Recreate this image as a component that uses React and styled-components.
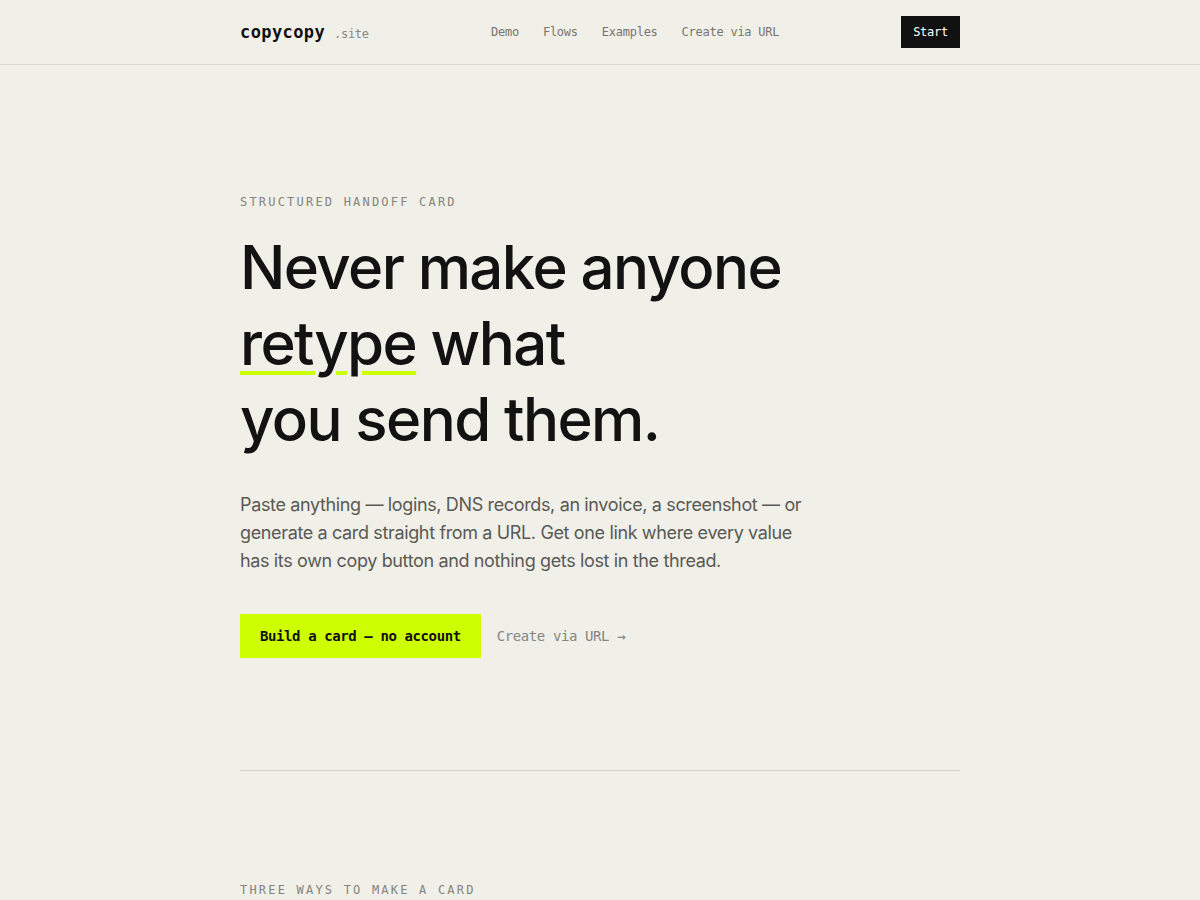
import React from "react";
import styled, { createGlobalStyle } from "styled-components";

const GlobalStyle = createGlobalStyle`
  html, body {
    margin: 0;
    padding: 0;
    background: #f0efe8;
  }
  * { box-sizing: border-box; }
`;

const mono = `"DejaVu Sans Mono", "Liberation Mono", monospace`;
const sans = `Inter, "Noto Sans", sans-serif`;

const Page = styled.div`
  min-height: 100vh;
  background: #f0efe8;
  color: #111;
  font-family: ${sans};
`;

const Header = styled.header`
  height: 65px;
  border-bottom: 1px solid #d9d8d1;
`;

const Inner = styled.div`
  width: 720px;
  margin: 0 auto;
`;

const HeaderRow = styled(Inner)`
  height: 64px;
  display: flex;
  align-items: center;
`;

const Logo = styled.div`
  display: flex;
  align-items: baseline;
  gap: 9px;
  width: 160px;
`;

const LogoName = styled.span`
  font-family: ${mono};
  font-weight: 700;
  font-size: 17px;
  letter-spacing: 0.4px;
`;

const LogoTld = styled.span`
  font-family: ${mono};
  font-size: 12px;
  letter-spacing: -0.3px;
  color: #8a8984;
`;

const Nav = styled.nav`
  display: flex;
  gap: 24px;
  margin-left: 91px;
`;

const NavLink = styled.a`
  font-family: ${mono};
  font-size: 12px;
  letter-spacing: -0.25px;
  color: #77766f;
  text-decoration: none;
`;

const StartButton = styled.a`
  margin-left: auto;
  background: #111;
  color: #fff;
  font-family: ${mono};
  font-size: 12px;
  letter-spacing: -0.25px;
  height: 32px;
  padding: 0 12px;
  display: flex;
  align-items: center;
  text-decoration: none;
`;

const Hero = styled.section`
  padding: 130px 0 112px;
  border-bottom: 1px solid #d3d2cb;
`;

const Eyebrow = styled.div`
  font-family: ${mono};
  font-size: 12px;
  line-height: 14px;
  letter-spacing: 2.2px;
  color: #85847e;
  text-transform: uppercase;
`;

const Title = styled.h1`
  margin: 20px 0 0;
  font-family: ${sans};
  font-weight: 500;
  font-size: 60px;
  line-height: 76px;
  letter-spacing: -1.6px;
  color: #121212;
`;

const Mark = styled.span`
  text-decoration: underline;
  text-decoration-color: #cdff00;
  text-decoration-thickness: 4px;
  text-underline-offset: 6px;
  text-decoration-skip-ink: auto;
`;

const Lead = styled.p`
  margin: 34px 0 0;
  max-width: 580px;
  font-family: ${sans};
  font-size: 18px;
  line-height: 28px;
  color: #5a5954;
  letter-spacing: -0.36px;
`;

const Actions = styled.div`
  margin-top: 39px;
  display: flex;
  align-items: center;
  gap: 16px;
`;

const PrimaryButton = styled.a`
  background: #cdff00;
  color: #111;
  font-family: ${mono};
  font-weight: 700;
  font-size: 14px;
  letter-spacing: -0.4px;
  height: 44px;
  padding: 0 20px;
  display: flex;
  align-items: center;
  text-decoration: none;
`;

const GhostLink = styled.a`
  font-family: ${mono};
  font-size: 14px;
  letter-spacing: -0.4px;
  color: #86857f;
  text-decoration: none;
`;

const Section = styled.section`
  padding-top: 112px;
`;

export default function App() {
  return (
    <Page>
      <GlobalStyle />
      <Header>
        <HeaderRow>
          <Logo>
            <LogoName>copycopy</LogoName>
            <LogoTld>.site</LogoTld>
          </Logo>
          <Nav>
            <NavLink href="#demo">Demo</NavLink>
            <NavLink href="#flows">Flows</NavLink>
            <NavLink href="#examples">Examples</NavLink>
            <NavLink href="#url">Create via URL</NavLink>
          </Nav>
          <StartButton href="#start">Start</StartButton>
        </HeaderRow>
      </Header>
      <Inner>
        <Hero>
          <Eyebrow>Structured handoff card</Eyebrow>
          <Title>
            Never make anyone
            <br />
            <Mark>retype</Mark> what
            <br />
            you send them.
          </Title>
          <Lead>
            Paste anything — logins, DNS records, an invoice, a screenshot — or
            generate a card straight from a URL. Get one link where every value
            has its own copy button and nothing gets lost in the thread.
          </Lead>
          <Actions>
            <PrimaryButton href="#build">Build a card — no account</PrimaryButton>
            <GhostLink href="#url">Create via URL →</GhostLink>
          </Actions>
        </Hero>
        <Section>
          <Eyebrow>Three ways to make a card</Eyebrow>
        </Section>
      </Inner>
    </Page>
  );
}
